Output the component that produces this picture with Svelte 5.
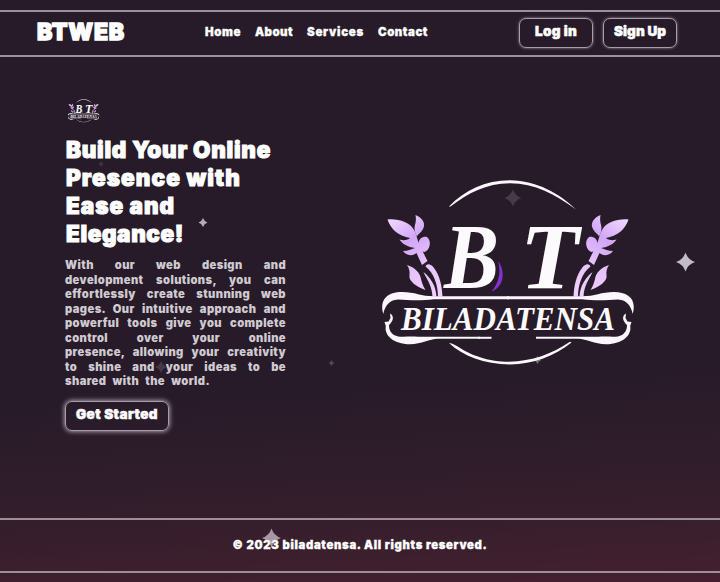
<script>
  const links = [
    { label: 'Home', width: 36 },
    { label: 'About', width: 38 },
    { label: 'Services', width: 57 },
    { label: 'Contact', width: 50 }
  ];
  const title = [
    { text: 'Build Your Online', width: 205 },
    { text: 'Presence with', width: 175 },
    { text: 'Ease and', width: 109 },
    { text: 'Elegance!', width: 118 }
  ];
  const copy = [
    'With our web design and',
    'development solutions, you can',
    'effortlessly create stunning web',
    'pages. Our intuitive approach and',
    'powerful tools give you complete',
    'control over your online',
    'presence, allowing your creativity',
    'to shine and your ideas to be',
    'shared with the world.'
  ];
  const stars = [
    { x: 685.5, y: 262, r: 9.5, o: 0.78 },
    { x: 203, y: 222.5, r: 4.5, o: 0.7 },
    { x: 271.5, y: 538, r: 9.5, o: 0.6 },
    { x: 513, y: 198, r: 8.5, o: 0.16 },
    { x: 331.5, y: 363, r: 3, o: 0.22 },
    { x: 161, y: 367, r: 6, o: 0.14 },
    { x: 101, y: 164, r: 3, o: 0.12 },
    { x: 537.5, y: 360, r: 4, o: 0.4 }
  ];

  // Tracks a single line of text so that it spans the given width.
  function fit(node, width) {
    const gap = (width - node.getBoundingClientRect().width) / node.textContent.length;
    node.style.letterSpacing = `${gap}px`;
  }
</script>

{#snippet sprig()}
  <path d="M387.5 219.5C398 218.5 410 222 414 230C417 235 417 240 420 246L427.5 261L422 265L416.5 253C411 257 406 255 403 251C408 251 411 249 415 248C408 247 402 244 399.5 239.5C404 241 408 240 410 238C399 236 391 230 387.5 219.5Z" />
  <path d="M415.5 215C423 218 426 224 423 229C421 233 418 234 417 236.5C413.5 231 414.5 226 415.5 223C416 220 416 218 415.5 215Z" />
  <path d="M418.5 244.5C418 238 424 236 427 237C432 241 430 250 424.5 252C421 252 420 248 418.5 244.5Z" />
  <path d="M407 265C416 268 420 273 421 279C422 283 423 286 425.5 290C417 287 408 281 409.5 275C410 271 409 268 407 265Z" />
  <path d="M425.5 266.5C427 263 431 264 434 268C440 276 442 286 442.5 297H438C438 285 434 273 425.5 266.5Z" />
  <path d="M423.5 272C431 278 436 286 436.5 297H432.5C432 285 427 280 423.5 272Z" />
{/snippet}

{#snippet scroll()}
  <path d="M383.3 314C379 299 388 292 402 292C415 292 421 296.3 434 296.3H509V299.2H434C420 301 408 300 398 299.5C389 300 385 306 383.3 314Z" />
  <path d="M390 313.5C394.5 316 393.5 321 389 325C389 330 391 333 394 335C399 338 407 336 418 336.8H480V338.8H438C429 339 422 344 410 344.3C393 344 384 335 385.8 326L384.5 322L388.5 321.5L390.5 318Z" />
{/snippet}

{#snippet emblem(id)}
  <svg viewBox="375 170 265 200" aria-label="Biladatensa">
    <defs>
      <linearGradient id="leaf-{id}" gradientUnits="userSpaceOnUse" x1="388" y1="218" x2="440" y2="290">
        <stop offset="0" stop-color="#f0dcff" />
        <stop offset=".35" stop-color="#d2a6f6" />
        <stop offset=".65" stop-color="#e6c2fb" />
        <stop offset="1" stop-color="#efcffb" />
      </linearGradient>
    </defs>
    <g fill="#faf6fb">
      <path d="M449 206.5C465 190 485 180.5 510 180.3C537 181 559 193 576 209.5C555 194 535 183.5 510 183.2C486 183.5 468 193 450.5 206.5Z" />
      <path d="M449 343C456 343.5 463 352 478 356.5C490 361 500 361.7 509 361.7C532 361.3 552 354 570 341.8L571.5 342.5C555 356 533 364 510 364.5C484 364 463 356 449 343Z" />
      {@render scroll()}
      <path d="M478 336.8H491.5V338.8H478Z" />
      <g transform="translate(1016 0) scale(-1 1)">{@render scroll()}</g>
    </g>
    <g fill="url(#leaf-{id})">
      {@render sprig()}
      <g transform="translate(1016 0) scale(-1 1)">{@render sprig()}</g>
    </g>
    <path d="M498 261C505.500 270 504.500 287 491.500 291.500C499.500 282 501 272 498 261Z" fill="#8431cf" />
    <g class="mark">
      <text x="444" y="288" font-size="93" textLength="55" lengthAdjust="spacingAndGlyphs">B</text>
      <text x="520" y="288" font-size="93" textLength="59" lengthAdjust="spacingAndGlyphs">T</text>
      <text x="401" y="329.5" font-size="33" textLength="214" lengthAdjust="spacingAndGlyphs">BILADATENSA</text>
    </g>
  </svg>
{/snippet}

<div class="page">
  <svg class="sky" viewBox="0 0 720 582" aria-hidden="true">
    {#each stars as s}
      <path transform="translate({s.x} {s.y}) scale({s.r})" opacity={s.o} d="M0-1Q.25-.25 1 0Q.25.25 0 1Q-.25.25-1 0Q-.25-.25 0-1Z" />
    {/each}
  </svg>

  <header>
    <div class="brand"><span use:fit={88}>BTWEB</span></div>
    <nav>
      {#each links as link}<a href="#top"><span use:fit={link.width}>{link.label}</span></a>{/each}
    </nav>
    <div class="actions">
      <button><span use:fit={42}>Log in</span></button>
      <button><span use:fit={52}>Sign Up</span></button>
    </div>
  </header>

  <main>
    <section class="intro">
      <div class="badge">{@render emblem('small')}</div>
      <h1>
        {#each title as line}<div><span use:fit={line.width}>{line.text}</span></div>{/each}
      </h1>
      <p>
        {#each copy as line}<span class="line">{line}</span>{/each}
      </p>
      <button class="start"><span use:fit={82}>Get Started</span></button>
    </section>
    <div class="logo">{@render emblem('large')}</div>
  </main>

  <footer><span use:fit={255}>© 2023 biladatensa. All rights reserved.</span></footer>
</div>

<style>
  :global(body) { margin: 0; background: #271b29; }
  .page {
    position: relative;
    box-sizing: border-box;
    width: 720px;
    height: 582px;
    padding: 10px 0 9px;
    display: flex;
    flex-direction: column;
    overflow: hidden;
    background: linear-gradient(177deg, #271b29 0%, #281b29 66%, #301d2b 80%, #3b1f2d 92%, #451f30 100%);
    color: #fff;
    font-family: Inter, "DejaVu Sans", sans-serif;
    font-weight: 900;
  }
  .sky { position: absolute; inset: 0; z-index: 1; fill: #f0e8f2; pointer-events: none; }
  span { display: inline-block; white-space: nowrap; }
  header {
    box-sizing: border-box;
    height: 47px;
    border-top: 2px solid #9b909c;
    border-bottom: 2px solid #9b909c;
    padding: 0 43px 0 37px;
    display: flex;
    flex: none;
  }
  .brand { width: 168px; font-size: 23px; line-height: 41px; -webkit-text-stroke: 1.3px #fff; }
  nav { display: flex; gap: 14px; font: 900 11.5px/40px Inter, sans-serif; -webkit-text-stroke: .3px #fff; }
  a { color: inherit; text-decoration: none; }
  .actions { display: flex; gap: 10px; margin-left: auto; padding-top: 6px; }
  button {
    box-sizing: border-box;
    width: 74px;
    height: 30px;
    padding: 0 0 4px;
    border: 1px solid #a89daa;
    border-radius: 7px;
    background: transparent;
    box-shadow: 0 0 3px #9a8d9d;
    color: #fff;
    font: 900 13.5px/23px Inter, sans-serif;
    -webkit-text-stroke: .5px #fff;
  }
  main { display: flex; flex: 1; padding-left: 65px; }
  .intro { width: 221px; padding-top: 40px; }
  .badge { width: 33px; height: 27px; margin-left: 2px; }
  .badge svg, .logo svg { display: block; width: 100%; height: 100%; overflow: visible; }
  h1 { margin: 12px 0 0 1px; font-size: 22.5px; line-height: 28px; font-weight: 900; -webkit-text-stroke: 1px #fff; }
  h1 div { height: 28px; }
  p { margin: 10px 0 0; color: #d0cad1; font: 900 11.2px/14.5px Inter, sans-serif; }
  .line { display: block; height: 14.5px; text-align: justify; text-align-last: justify; letter-spacing: .4px; }
  .line:last-child { width: 145px; }
  .start { width: 104px; margin-top: 12px; padding-bottom: 2px; box-shadow: 0 0 4px 1px #a295a5; }
  .logo { width: 265px; height: 200px; margin: 113px 0 0 89px; }
  .mark { fill: #fcfafc; font-family: "Liberation Serif", serif; font-weight: bold; font-style: italic; }
  footer {
    box-sizing: border-box;
    height: 55px;
    border-top: 2px solid #9b8e99;
    border-bottom: 2px solid #9b8e99;
    text-align: center;
    font: 900 11.3px/50px Inter, sans-serif;
    -webkit-text-stroke: .3px #fff;
  }
</style>
